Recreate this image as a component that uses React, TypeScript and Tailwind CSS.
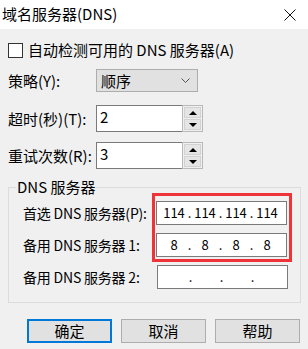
import React from "react";

const FONT = "font-['Noto_Sans_CJK_SC','Noto_Sans',sans-serif]";

function Spin({ value }: { value: string }) {
  return (
    <div className="flex h-[27px] w-[107px]">
      <div className="flex-1 border border-r-0 border-[#7a7a7a] bg-white pl-[3px] pt-[1px] text-[15px] leading-[20px]">
        {value}
      </div>
      <div className="flex w-[21px] flex-col gap-[1px] border border-[#b9b9b9] bg-[#f0f0f0] p-[1px]">
        <div className="flex flex-1 items-center justify-center border border-[#d2d2d2] bg-[#e5e5e5]">
          <div className="h-0 w-0 border-x-[4px] border-b-[4px] border-x-transparent border-b-black" />
        </div>
        <div className="flex flex-1 items-center justify-center border border-[#d2d2d2] bg-[#e5e5e5]">
          <div className="h-0 w-0 border-x-[4px] border-t-[4px] border-x-transparent border-t-black" />
        </div>
      </div>
    </div>
  );
}

function IpBox({ parts, className = "" }: { parts: string[]; className?: string }) {
  return (
    <div
      className={`flex h-[24px] w-[131px] items-center border border-[#7a7a7a] bg-white pl-[4px] text-[13px] leading-[20px] ${className}`}
    >
      {parts.map((p, i) => (
        <React.Fragment key={i}>
          <span className="w-[26px] text-center">{p}</span>
          {i < 3 && <span className="w-[5px] text-center">.</span>}
        </React.Fragment>
      ))}
    </div>
  );
}

function Btn({ label, primary }: { label: string; primary?: boolean }) {
  return (
    <button
      type="button"
      className={`h-[24px] w-[85px] bg-[#e1e1e1] text-[15px] leading-[20px] ${
        primary ? "border-2 border-[#0078d7]" : "border border-[#adadad]"
      }`}
    >
      {label}
    </button>
  );
}

export default function App() {
  return (
    <div className={`h-[349px] w-[308px] overflow-hidden bg-[#f0f0f0] text-black ${FONT}`}>
      {/* title bar */}
      <div className="flex h-[29px] items-center justify-between bg-white pl-[2px] pr-[12px] text-[15px]">
        <span>域名服务器(DNS)</span>
        <svg width="12" height="12" viewBox="0 0 12 12" stroke="#111" strokeWidth="1" aria-hidden="true">
          <path d="M0.5 0.5l11 11M11.5 0.5l-11 11" />
        </svg>
      </div>

      <div className="px-[8px] text-[15px] leading-[20px]">
        <div className="mt-[11px] flex h-[20px] items-center gap-[5px]">
          <div className="box-border h-[15px] min-w-[15px] w-[15px] border border-[#333] bg-white" />
          <span className="whitespace-nowrap">自动检测可用的 DNS 服务器(A)</span>
        </div>

        <div className="mt-[9px] flex h-[23px] items-center">
          <span className="w-[88px]">策略(Y):</span>
          <div className="flex h-[23px] w-[102px] items-center justify-between border border-[#adadad] bg-[#e1e1e1] pl-[4px] pr-[7px]">
            <span>顺序</span>
            <svg width="9" height="5" viewBox="0 0 9 5" fill="none" stroke="#555" strokeWidth="1" aria-hidden="true">
              <path d="M0.5 0.5l4 4 4-4" />
            </svg>
          </div>
        </div>

        <div className="mt-[13px] flex h-[27px] items-center">
          <span className="w-[88px]">超时(秒)(T):</span>
          <Spin value="2" />
        </div>

        <div className="mt-[10px] flex h-[27px] items-center">
          <span className="w-[88px]">重试次数(R):</span>
          <Spin value="3" />
        </div>

        <fieldset className="mt-[10px] w-[293px] border border-[#dcdcdc] p-0">
          <legend className="ml-[7px] px-[1px] leading-[16px]">DNS 服务器</legend>
          <div className="-mt-[2px] flex pb-[13px] pl-[14px]">
            <div className="flex w-[129px] flex-col gap-[8px] pt-[8px] text-[14px] tracking-[-0.2px]">
              <span className="flex h-[24px] items-center whitespace-nowrap">首选 DNS 服务器(P):</span>
              <span className="flex h-[24px] items-center whitespace-nowrap">备用 DNS 服务器 1:</span>
              <span className="flex h-[24px] items-center whitespace-nowrap">备用 DNS 服务器 2:</span>
            </div>
            <div className="flex flex-col">
              <div className="flex w-[140px] flex-col gap-[8px] border-[3px] border-[#ee3438] pb-[2px] pl-[1px] pt-[5px]">
                <IpBox parts={["114", "114", "114", "114"]} />
                <IpBox parts={["8", "8", "8", "8"]} />
              </div>
              <IpBox parts={["", "", "", ""]} className="ml-[5px] mt-[3px] w-[130px]" />
            </div>
          </div>
        </fieldset>

        <div className="mt-[16px] flex gap-[9px] pl-[19px]">
          <Btn label="确定" primary />
          <Btn label="取消" />
          <Btn label="帮助" />
        </div>
      </div>
    </div>
  );
}
